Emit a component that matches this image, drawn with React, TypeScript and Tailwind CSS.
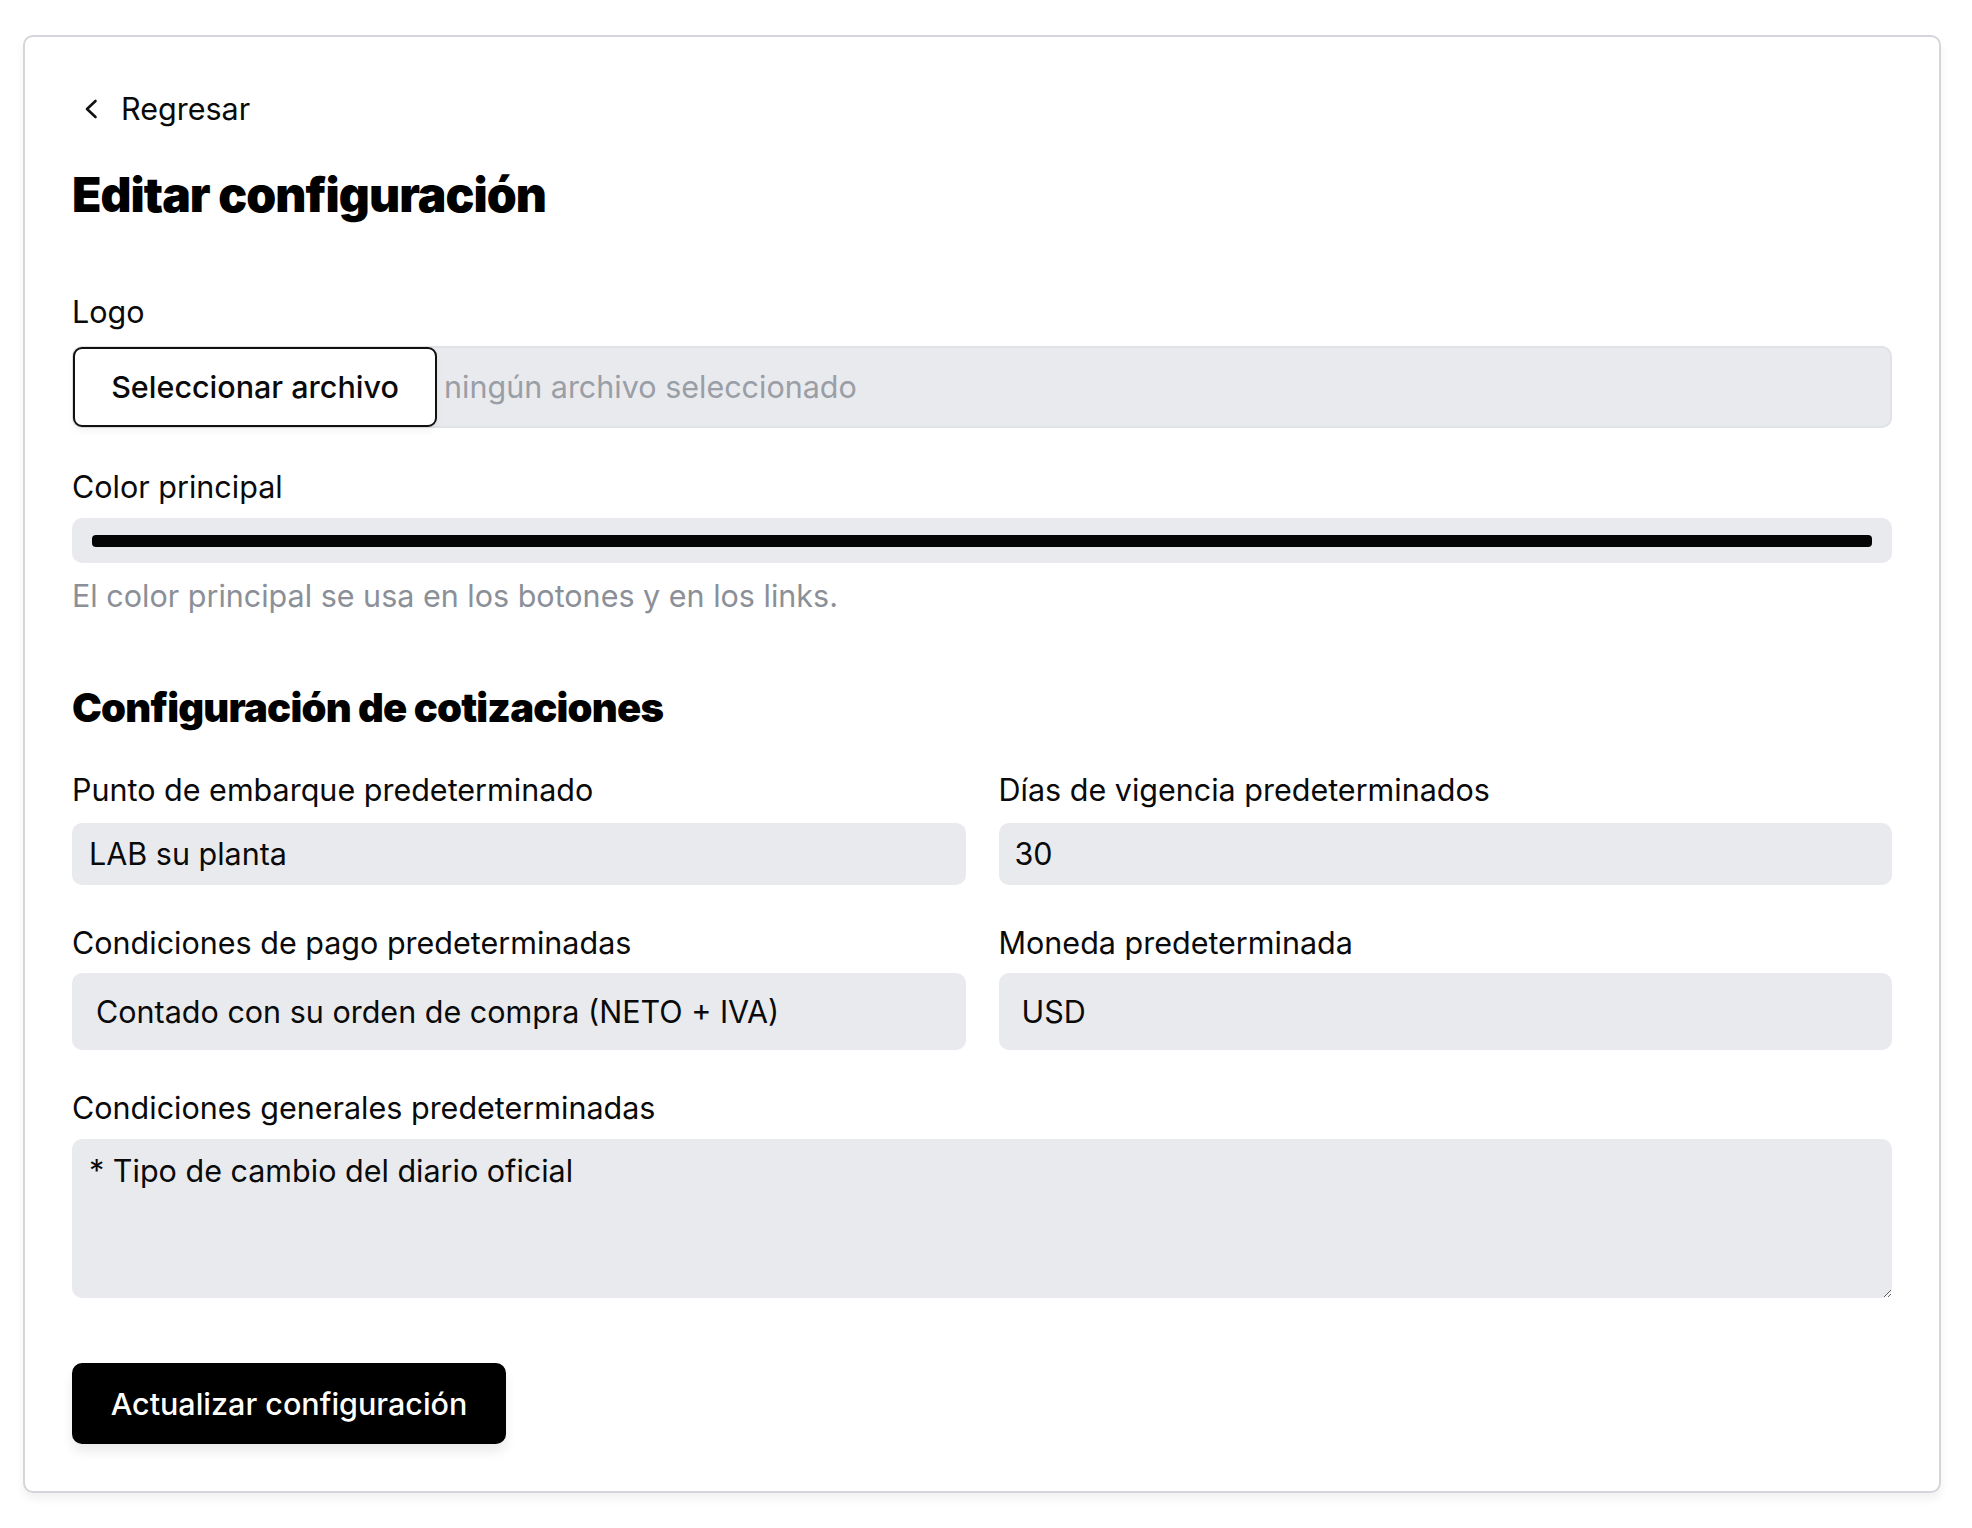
import React from "react";

const font = { fontFamily: "Inter, 'Noto Sans', sans-serif" };

function Label({ children, className = "" }: { children: React.ReactNode; className?: string }) {
  return (
    <label className={`block text-[30.5px] leading-[36px] text-[#0a0a0a] ${className}`}>{children}</label>
  );
}

export default function App() {
  return (
    <div className="min-h-[1528px] bg-white pt-[35px] pl-[23px]" style={font}>
      <div className="w-[1918px] rounded-[10px] border-2 border-[#d4d6db] bg-white px-[47px] pt-[54px] pb-[47px] shadow-[0_6px_10px_rgba(0,0,0,0.06)]">
        {/* Back link */}
        <a className="flex h-[36px] items-center text-[30.5px] leading-[36px] text-[#0a0a0a]" href="#">
          <svg width="14" height="20" viewBox="0 0 14 20" className="ml-[12px] mr-[23px]" fill="none">
            <path d="M11.5 2 L3 10 L11.5 18" stroke="#111" strokeWidth="2.6" strokeLinecap="round" strokeLinejoin="round" />
          </svg>
          Regresar
        </a>

        <h1 className="mt-[41px] text-[48px] leading-[54px] font-black tracking-[-0.02em] text-black">
          Editar configuración
        </h1>

        {/* Logo */}
        <Label className="mt-[72px]">Logo</Label>
        <div className="mt-[16px] flex h-[82px] items-center rounded-[10px] border-2 border-[#e0e2e6] bg-[#e9eaee] p-0">
          <button className="-ml-[1px] flex h-[80px] w-[364px] items-center justify-center rounded-[9px] border-2 border-[#111] bg-white text-[30.5px] font-medium text-[#0a0a0a] shadow-[0_4px_6px_rgba(0,0,0,0.05)]">
            Seleccionar archivo
          </button>
          <span className="ml-[7px] text-[30.5px] text-[#9a9ea6]">ningún archivo seleccionado</span>
        </div>

        {/* Color */}
        <Label className="mt-[41px]">Color principal</Label>
        <div className="mt-[13px] flex h-[45px] items-center rounded-[10px] bg-[#e9eaee] px-[20px]">
          <div className="h-[12px] w-full rounded-[4px] bg-[#050505]" />
        </div>
        <p className="mt-[15px] text-[30.5px] leading-[36px] text-[#8b9098]">
          El color principal se usa en los botones y en los links.
        </p>

        <h2 className="mt-[70px] text-[40px] leading-[48px] font-black tracking-[-0.02em] text-black">
          Configuración de cotizaciones
        </h2>

        <div className="mt-[40px] grid grid-cols-2 gap-x-[33px]">
          <div>
            <Label>Punto de embarque predeterminado</Label>
            <div className="mt-[15px] flex h-[62px] items-center rounded-[10px] bg-[#e9eaee] pl-[17px] text-[30.5px] text-[#0a0a0a]">
              LAB su planta
            </div>
          </div>
          <div>
            <Label>Días de vigencia predeterminados</Label>
            <div className="mt-[15px] flex h-[62px] items-center rounded-[10px] bg-[#e9eaee] pl-[16px] text-[30.5px] text-[#0a0a0a]">
              30
            </div>
          </div>
          <div className="mt-[40px]">
            <Label>Condiciones de pago predeterminadas</Label>
            <div className="mt-[12px] flex h-[77px] items-center rounded-[10px] bg-[#e9eaee] pl-[24px] text-[30.5px] text-[#0a0a0a]">
              Contado con su orden de compra (NETO + IVA)
            </div>
          </div>
          <div className="mt-[40px]">
            <Label>Moneda predeterminada</Label>
            <div className="mt-[12px] flex h-[77px] items-center rounded-[10px] bg-[#e9eaee] pl-[23px] text-[30.5px] text-[#0a0a0a]">
              USD
            </div>
          </div>
        </div>

        <Label className="mt-[40px]">Condiciones generales predeterminadas</Label>
        <textarea
          className="mt-[13px] block h-[159px] w-full rounded-[10px] bg-[#e9eaee] px-[17px] pt-[14px] text-[30.5px] leading-[36px] text-[#0a0a0a] outline-none"
          style={font}
          defaultValue="* Tipo de cambio del diario oficial"
        />

        <button className="mt-[65px] flex h-[81px] w-[434px] items-center justify-center rounded-[10px] bg-black text-[30.5px] font-medium text-white shadow-[0_8px_12px_rgba(0,0,0,0.08)]">
          Actualizar configuración
        </button>
      </div>
    </div>
  );
}
